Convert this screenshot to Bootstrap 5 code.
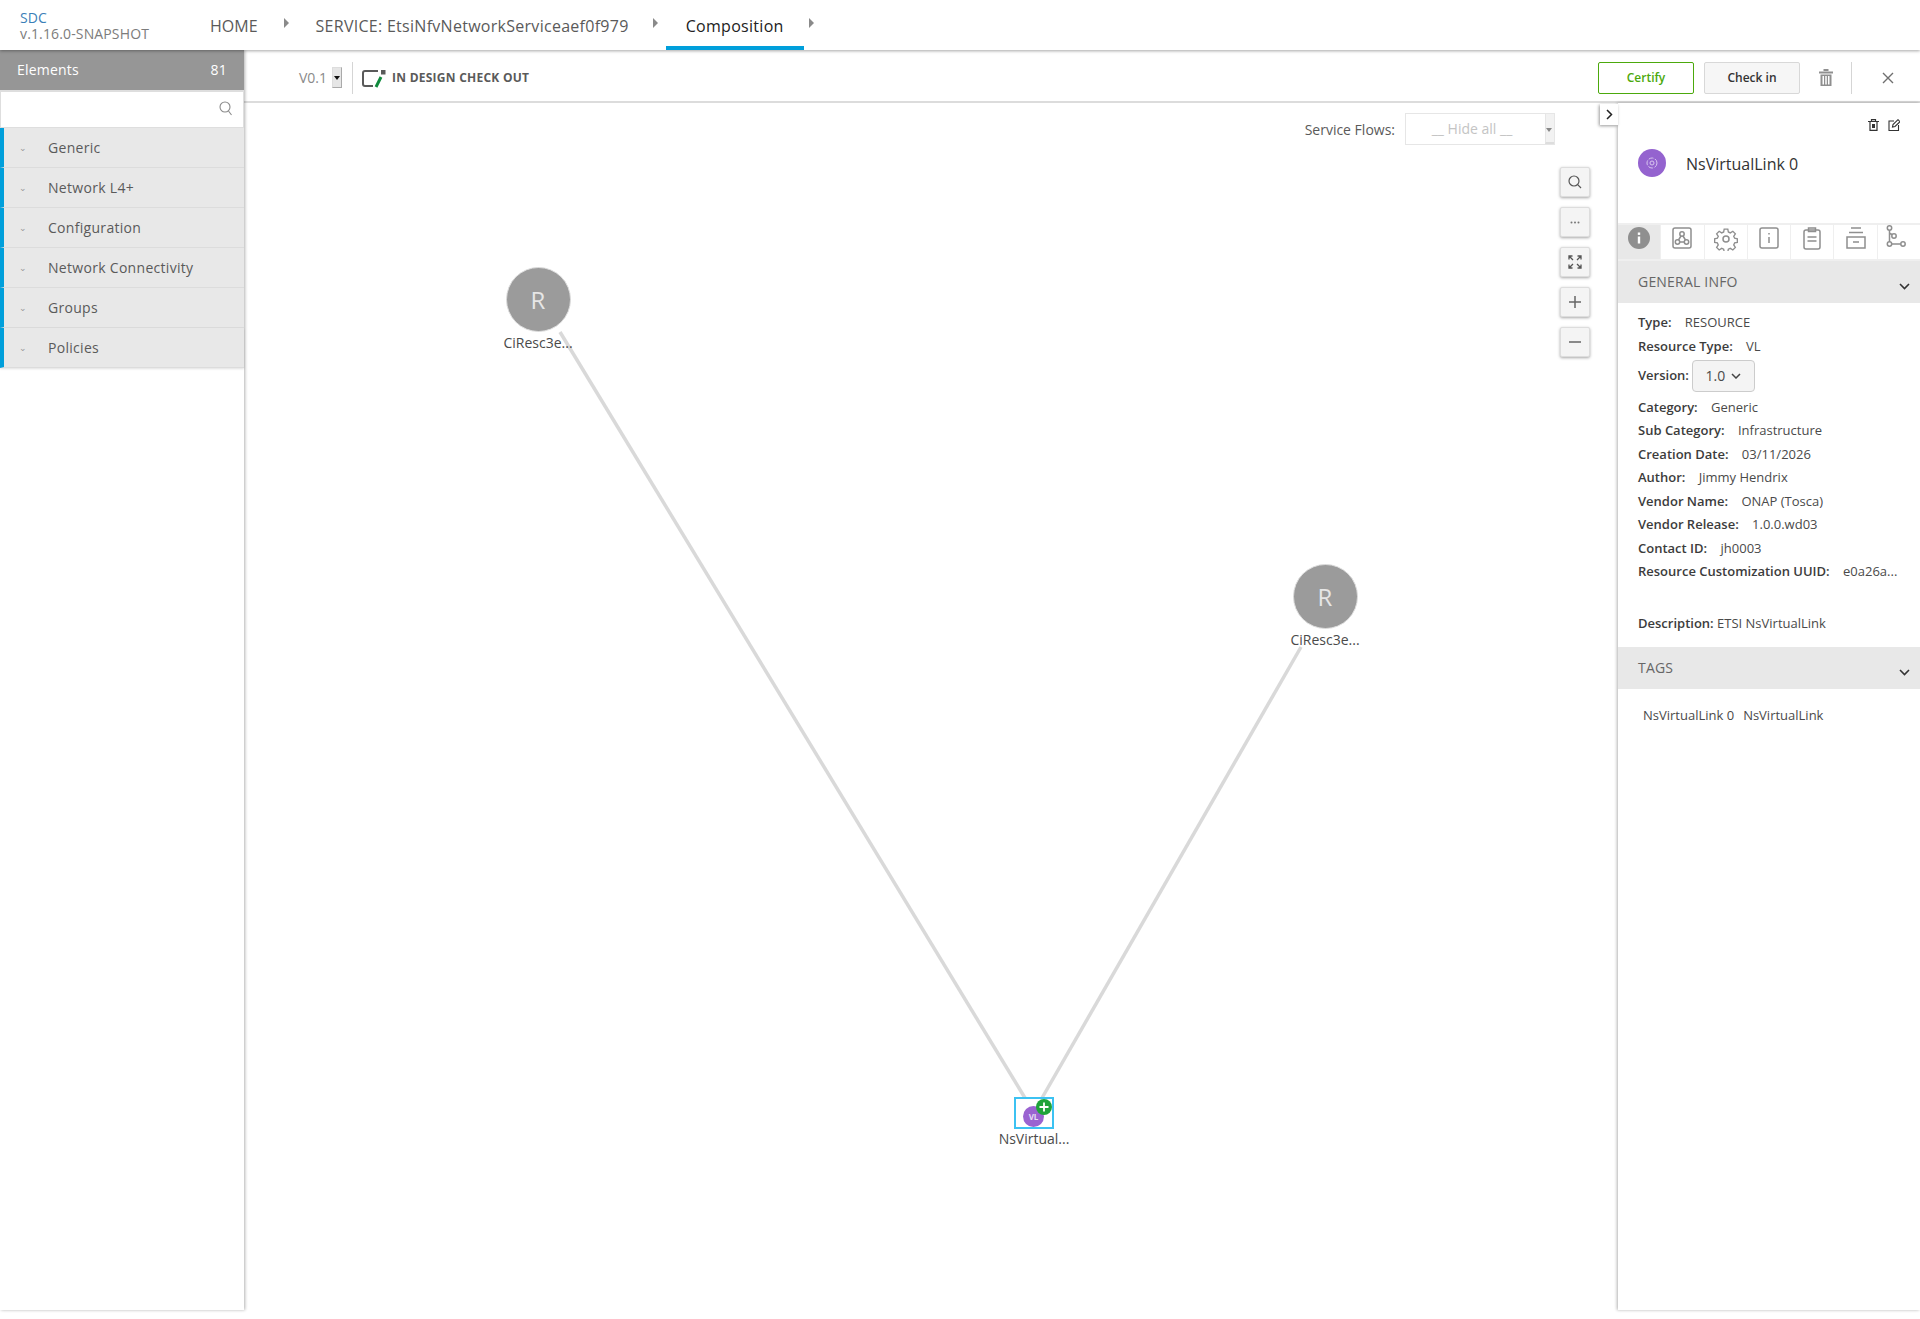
<!DOCTYPE html>
<html lang="en">
<head>
<meta charset="utf-8">
<title>SDC Composition</title>
<link href="https://cdn.jsdelivr.net/npm/bootstrap@5.3.0/dist/css/bootstrap.min.css" rel="stylesheet">
<style>
html,body{height:100%;}
body{font-family:"Open Sans","Liberation Sans",sans-serif;color:#5a5a5a;background:#fff;overflow:hidden;}
.app-shell{height:1310px;display:flex;flex-direction:column;}
.top-bar{height:50px;flex:none;padding-left:20px;box-shadow:0 1px 3px rgba(0,0,0,.35);position:relative;z-index:5;background:#fff;}
.brand-box{width:190px;font-size:14px;line-height:16px;padding-top:10px;color:#7c7c7c;letter-spacing:.14px;}
.brand-box b{display:block;font-weight:400;color:#3b7fb8;font-size:14px;}
.crumb{font-size:16px;line-height:52px;color:#5a5a5a;height:50px;}
.crumb-wide{font-weight:500;letter-spacing:.28px;}
.crumb-active{color:#222;border-bottom:4px solid #009fdb;padding:0 20px;font-weight:500;letter-spacing:.3px;}
.crumb-sep{height:50px;display:flex;align-items:center;}
.crumb-arrow{width:0;height:0;border-left:5px solid #8a8a8a;border-top:5px solid transparent;border-bottom:5px solid transparent;margin-top:-4px;}
.sep-a{width:58px;justify-content:center;}
.sep-b{width:37px;justify-content:flex-end;padding-right:8px;}
.sep-c{width:16px;justify-content:center;}
.work-row{flex:1;min-height:0;}
.side-left{width:244px;flex:none;box-shadow:1px 0 3px rgba(0,0,0,.3);background:#fff;position:relative;z-index:3;}
.el-head{height:40px;background:#969696;color:#fff;font-size:14px;padding:0 17px 2px 17px;font-weight:500;letter-spacing:.2px;}
.el-search{height:38px;border:1px solid #dedede;border-top-width:2px;padding:0 10px 3px 0;}
.el-item{height:40px;background:#e8e8e8;border-left:4px solid #009fdb;border-bottom:1px solid #dcdcdc;font-size:14px;color:#5a5a5a;font-weight:500;letter-spacing:.3px;}
.el-item:last-child{box-shadow:0 1px 2px rgba(0,0,0,.12);}
.el-dash{width:44px;padding-left:15px;color:#9a9a9a;font-size:9px;font-weight:400;}
.main-col{flex:1;min-width:0;}
.tool-bar{height:53px;flex:none;border-bottom:2px solid #dcdcdc;padding:4px 0 0 55px;background:#fff;}
.ver-text{font-size:14px;color:#8a8a8a;}
.ver-caret{width:10px;height:21px;background:#e6e6e6;border:1px solid #aaa;border-left-color:#ddd;border-top-color:#ddd;margin:0 10px 0 5px;position:relative;}
.ver-caret::after{content:"";position:absolute;left:1px;top:8px;border-left:3px solid transparent;border-right:3px solid transparent;border-top:4px solid #111;}
.v-rule{width:1px;height:32px;background:#d5d5d5;}
.state-icon{margin:0 5px 0 8px;}
.state-text{font-size:12px;font-weight:700;color:#5a5a5a;letter-spacing:.25px;}
.act-btn{width:96px;height:32px;font-size:12px;font-weight:600;display:flex;align-items:center;justify-content:center;border-radius:2px;}
.act-green{border:1px solid #4ca90c;color:#4ca90c;background:#fff;margin-right:10px;}
.act-gray{border:1px solid #d8d8d8;color:#333;background:#f6f6f6;margin-right:19px;}
.rule-gap{margin-left:18px;}
.close-x{margin:0 26px 0 30px;}
.stage-row{flex:1;min-height:0;}
.stage{flex:1;position:relative;min-width:0;}
.stage-lines{position:absolute;left:0;top:0;width:100%;height:100%;}
.flows-row{position:relative;margin-right:63px;height:52px;}
.flows-label{font-size:14px;color:#5a5a5a;margin-right:10px;}
.flows-sel{width:150px;height:32px;border:1px solid #e6e6e6;font-size:14px;color:#c4c4c4;text-align:center;line-height:30px;position:relative;padding-right:16px;}
.flows-sel::after{content:"";position:absolute;right:0;top:0;bottom:0;width:9px;background:#f2f2f2;border-left:1px solid #e6e6e6;border-bottom:2px solid #ddd;}
.flows-sel::before{content:"";position:absolute;right:2px;top:14px;border-left:3px solid transparent;border-right:3px solid transparent;border-top:4px solid #888;z-index:1;}
.zoom-stack{position:absolute;right:28px;top:64px;gap:10px;}
.zoom-btn{width:30px;height:30px;background:#f4f4f4;border:1px solid #ddd;box-shadow:0 1px 3px rgba(0,0,0,.35);border-radius:2px;color:#666;}
.node-place{position:absolute;width:100px;text-align:center;font-size:14px;font-weight:500;color:#4a4a4a;line-height:18px;}
.node-r{width:65px;height:65px;border-radius:50%;background:#9b9b9b;color:#e6e6e6;font-size:24px;line-height:63px;margin:0 auto 2px;font-weight:400;border:1px solid #ddd;}
.node-vl-box{width:40px;height:32px;border:2px solid #3cc2f2;margin:0 auto 1px;position:relative;background:#fff;}
.node-vl{position:absolute;left:7px;top:7px;width:21px;height:21px;border-radius:50%;background:#9a63d1;color:#e8dcf5;font-size:8px;line-height:21px;font-weight:700;}
.node-plus{position:absolute;left:20px;top:0;width:16px;height:16px;}
.n-one{left:244px;top:164px;}
.n-two{left:1031px;top:461px;}
.n-three{left:740px;top:994px;}
.side-right{width:302px;flex:none;position:relative;box-shadow:-1px 0 3px rgba(0,0,0,.3);background:#fff;z-index:3;}
.collapse-tab{position:absolute;left:-18px;top:1px;width:18px;height:21px;background:#fff;box-shadow:-1px 1px 3px rgba(0,0,0,.4);}
.panel-tools{height:45px;padding:16px 20px 0 0;gap:9px;}
.panel-title{height:75px;padding:1px 0 0 20px;align-items:flex-start;}
.panel-dot{width:28px;height:28px;border-radius:50%;background:#9463cf;flex:none;}
.panel-name{font-size:16px;color:#333;margin-left:20px;line-height:30px;font-weight:400;}
.tab-strip{height:38px;border-top:2px solid #efefef;border-bottom:2px solid #efefef;}
.tab-cell{flex:1;border-right:1px solid #efefef;display:flex;justify-content:center;padding-top:2px;}
.tab-cell-on{background:#e8e8e8;}
.tab-last{border-right:0;padding-top:0;}
.tab-last svg{margin-right:5px;}
.sec-head{height:42px;background:#e8e8e8;padding:0 10px 0 20px;font-size:14px;font-weight:500;color:#666;letter-spacing:.2px;}
.sec-head span{margin-top:-1px;}
.sec-chev{margin-top:8px;}
.sec-body{padding:10px 0 0 20px;font-size:13px;color:#4a4a4a;}
.info-line{line-height:18px;margin-bottom:5.55px;white-space:nowrap;}
.info-line b{font-weight:600;color:#3c3c3c;margin-right:10px;}
.info-tight{margin-bottom:0;}
.ver-line{display:flex;align-items:center;height:32px;margin:5px 0 6px;}
.ver-line b{font-weight:600;color:#3c3c3c;margin-right:3px;}
.ver-dd{width:63px;height:32px;border:1px solid #ccc;background:#f4f4f4;border-radius:4px;gap:6px;font-size:14px;}
.desc-line{margin-top:34px;line-height:18px;height:33px;}
.desc-line b{font-weight:600;color:#3c3c3c;}
.tag-line{padding:17px 0 0 25px;font-size:13px;color:#4a4a4a;line-height:18px;}
.tag-line span{margin-right:9px;}
svg{display:block;}
</style>
</head>
<body>
<div class="app-shell">
  <nav class="top-bar d-flex align-items-start">
    <div class="brand-box"><b>SDC</b>v.1.16.0-SNAPSHOT</div>
    <div class="crumb">HOME</div>
    <div class="crumb-sep sep-a"><div class="crumb-arrow"></div></div>
    <div class="crumb crumb-wide">SERVICE: EtsiNfvNetworkServiceaef0f979</div>
    <div class="crumb-sep sep-b"><div class="crumb-arrow"></div></div>
    <div class="crumb crumb-active">Composition</div>
    <div class="crumb-sep sep-c"><div class="crumb-arrow"></div></div>
  </nav>
  <div class="work-row d-flex">
    <aside class="side-left">
      <div class="el-head d-flex align-items-center justify-content-between"><span>Elements</span><span>81</span></div>
      <div class="el-search d-flex align-items-center justify-content-end">
        <svg width="14" height="15" viewBox="0 0 14 15" fill="none" stroke="#8a8a8a" stroke-width="1.1"><circle cx="6" cy="6" r="5"/><path d="M9.5 10l3 4"/></svg>
      </div>
      <div class="el-item d-flex align-items-center"><span class="el-dash">&#8964;</span>Generic</div>
      <div class="el-item d-flex align-items-center"><span class="el-dash">&#8964;</span>Network L4+</div>
      <div class="el-item d-flex align-items-center"><span class="el-dash">&#8964;</span>Configuration</div>
      <div class="el-item d-flex align-items-center"><span class="el-dash">&#8964;</span>Network Connectivity</div>
      <div class="el-item d-flex align-items-center"><span class="el-dash">&#8964;</span>Groups</div>
      <div class="el-item d-flex align-items-center"><span class="el-dash">&#8964;</span>Policies</div>
    </aside>
    <div class="main-col d-flex flex-column">
      <div class="tool-bar d-flex align-items-center">
        <span class="ver-text">V0.1</span><span class="ver-caret"></span><span class="v-rule"></span>
        <svg class="state-icon" width="26" height="20" viewBox="0 0 26 20" fill="none"><path d="M17 3H4a2 2 0 0 0-2 2v11a2 2 0 0 0 2 2h8" stroke="#5a5a5a" stroke-width="2"/><path d="M15 19l5-10" stroke="#0f8a3c" stroke-width="3"/><rect x="20" y="2" width="4.500" height="4.500" fill="#5a5a5a"/></svg>
        <span class="state-text">IN DESIGN CHECK OUT</span>
        <div class="ms-auto d-flex align-items-center">
          <div class="act-btn act-green">Certify</div>
          <div class="act-btn act-gray">Check in</div>
          <svg width="14" height="17" viewBox="0 0 14 17" fill="#8f8f8f"><rect x="0" y="2.500" width="14" height="2"/><rect x="4.500" y="0" width="5" height="2"/><path d="M1.500 5.500h11v11.500h-11zM3.500 7v8.500h1.500V7zM6.250 7v8.500h1.500V7zM9 7v8.500h1.500V7z" fill-rule="evenodd"/></svg>
          <span class="v-rule rule-gap"></span>
          <svg class="close-x" width="12" height="12" viewBox="0 0 12 12" stroke="#6f6f6f" stroke-width="1.400"><path d="M1 1l10 10M11 1L1 11"/></svg>
        </div>
      </div>
      <div class="stage-row d-flex">
        <div class="stage">
          <svg class="stage-lines" viewBox="0 0 1374 1207" preserveAspectRatio="none" fill="none" stroke="#d9d9d9" stroke-width="3.5"><path d="M316 229L781 995"/><path d="M1057 544L798 995"/></svg>
          <div class="flows-row d-flex justify-content-end align-items-center">
            <span class="flows-label">Service Flows:</span>
            <div class="flows-sel">__ Hide all __</div>
          </div>
          <div class="zoom-stack d-flex flex-column">
            <div class="zoom-btn d-flex align-items-center justify-content-center"><svg width="14" height="14" viewBox="0 0 14 14" fill="none" stroke="#555" stroke-width="1.200"><circle cx="6" cy="6" r="5"/><path d="M9.700 9.700L13 13"/></svg></div>
            <div class="zoom-btn d-flex align-items-center justify-content-center"><svg width="10" height="3" viewBox="0 0 10 3" fill="#777"><circle cx="1.500" cy="1.500" r="1"/><circle cx="5" cy="1.500" r="1"/><circle cx="8.500" cy="1.500" r="1"/></svg></div>
            <div class="zoom-btn d-flex align-items-center justify-content-center"><svg width="14" height="14" viewBox="0 0 14 14" fill="none" stroke="#555" stroke-width="1.300"><path d="M1 4.500V1h3.500M1 1l4 4M9.500 1H13v3.500M13 1L9 5M1 9.500V13h3.500M1 13l4-4M13 9.500V13H9.500M13 13L9 9"/></svg></div>
            <div class="zoom-btn d-flex align-items-center justify-content-center"><svg width="12" height="12" viewBox="0 0 12 12" stroke="#666" stroke-width="1.500"><path d="M0 6h12M6 0v12"/></svg></div>
            <div class="zoom-btn d-flex align-items-center justify-content-center"><svg width="12" height="2" viewBox="0 0 12 2" stroke="#666" stroke-width="1.500"><path d="M0 1h12"/></svg></div>
          </div>
          <div class="node-place n-one"><div class="node-r">R</div>CiResc3e...</div>
          <div class="node-place n-two"><div class="node-r">R</div>CiResc3e...</div>
          <div class="node-place n-three">
            <div class="node-vl-box">
              <div class="node-vl">VL</div>
              <svg class="node-plus" viewBox="0 0 16 16"><circle cx="8" cy="8" r="8" fill="#1fa33a"/><path d="M8 3.500v9M3.500 8h9" stroke="#fff" stroke-width="1.800"/></svg>
            </div>
            <div>NsVirtual...</div>
          </div>
        </div>
        <aside class="side-right">
          <div class="collapse-tab d-flex align-items-center justify-content-center"><svg width="7" height="11" viewBox="0 0 7 11" fill="none" stroke="#222" stroke-width="1.500"><path d="M1 1l4.500 4.500L1 10"/></svg></div>
          <div class="panel-tools d-flex justify-content-end">
            <svg width="11" height="12" viewBox="0 0 11 12" fill="none" stroke="#333" stroke-width="1.200"><path d="M0 2.500h11M3.500 2V.7h4V2M2 2.500V11.300h7V2.500"/><rect x="4" y="5" width="3" height="4" fill="#333" stroke="none"/></svg>
            <svg width="12" height="12" viewBox="0 0 12 12" fill="none" stroke="#333" stroke-width="1.100"><path d="M6 2H1v9.500h9.500V6"/><path d="M4.500 8l.5-2.500L10 .7l2 2L7 7.500z"/></svg>
          </div>
          <div class="panel-title d-flex">
            <div class="panel-dot d-flex align-items-center justify-content-center"><svg width="12" height="12" viewBox="0 0 12 12" fill="none" stroke="#d9c7ef" stroke-width="1"><circle cx="6" cy="6" r="5" stroke-dasharray="5 1.500"/><circle cx="6" cy="6" r="2"/></svg></div>
            <div class="panel-name">NsVirtualLink 0</div>
          </div>
          <div class="tab-strip d-flex">
            <div class="tab-cell tab-cell-on"><svg width="22" height="22" viewBox="0 0 22 22"><circle cx="11" cy="11" r="11" fill="#8f8f8f"/><rect x="9.800" y="9.500" width="2.400" height="7" fill="#fff"/><rect x="9.800" y="5.500" width="2.400" height="2.400" fill="#fff"/></svg></div>
            <div class="tab-cell"><svg width="20" height="22" viewBox="0 0 20 22" fill="none" stroke="#8f8f8f" stroke-width="1.500"><rect x="1" y="1" width="18" height="20" rx="2"/><circle cx="10" cy="7" r="2.200"/><circle cx="5.500" cy="15" r="2.200"/><circle cx="14.500" cy="15" r="2.200"/><path d="M9 9l-2.500 4M11 9l2.500 4M7.700 15h4.600"/></svg></div>
            <div class="tab-cell"><svg width="24" height="24" viewBox="0 0 24 24" fill="none" stroke="#8f8f8f" stroke-width="1.500"><circle cx="12" cy="12" r="3"/><path d="M10 1h4l.6 3.200 2.200 1 2.800-1.800 2.800 2.800-1.800 2.800 1 2.200 3 .6v4l-3 .6-1 2.200 1.800 2.800-2.800 2.800-2.800-1.800-2.200 1-.6 3h-4l-.6-3-2.200-1-2.800 1.800-2.800-2.800 1.800-2.800-1-2.200-3-.6v-4l3-.6 1-2.200-1.800-2.800 2.800-2.800 2.800 1.800 2.200-1z" transform="translate(1.200 1.200) scale(.9)"/></svg></div>
            <div class="tab-cell"><svg width="20" height="22" viewBox="0 0 20 22" fill="none" stroke="#8f8f8f" stroke-width="1.500"><rect x="1" y="1" width="18" height="20" rx="2"/><path d="M10 6v1.500M10 10v6"/></svg></div>
            <div class="tab-cell"><svg width="18" height="23" viewBox="0 0 18 23" fill="none" stroke="#8f8f8f" stroke-width="1.500"><rect x="1" y="3" width="16" height="19" rx="2"/><path d="M5.500 3V1h7v3.500h-7zM4.500 10h9M4.500 14h9"/></svg></div>
            <div class="tab-cell"><svg width="20" height="22" viewBox="0 0 20 22" fill="none" stroke="#8f8f8f" stroke-width="1.500"><path d="M5 1h10M3 5.500h14M1 10h18v11H1zM7 15h6"/></svg></div>
            <div class="tab-cell tab-last"><svg width="20" height="24" viewBox="0 0 20 24" fill="none" stroke="#8f8f8f" stroke-width="1.500"><circle cx="3.500" cy="3" r="2.200"/><circle cx="3.500" cy="19" r="2.200"/><circle cx="8" cy="11" r="2.200"/><circle cx="17" cy="19" r="2.200"/><path d="M3.500 5.200v11.600M5.700 19h9.100M4 8.500l2.200 1"/></svg></div>
          </div>
          <div class="sec-head d-flex align-items-center justify-content-between"><span>GENERAL INFO</span><svg class="sec-chev" width="11" height="7" viewBox="0 0 11 7" fill="none" stroke="#333" stroke-width="1.600"><path d="M1 1l4.500 4.500L10 1"/></svg></div>
          <div class="sec-body">
            <div class="info-line"><b>Type:</b> RESOURCE</div>
            <div class="info-line info-tight"><b>Resource Type:</b> VL</div>
            <div class="ver-line"><b>Version:</b><div class="ver-dd d-flex align-items-center justify-content-center">1.0 <svg width="10" height="6" viewBox="0 0 10 6" fill="none" stroke="#444" stroke-width="1.500"><path d="M1 1l4 4 4-4"/></svg></div></div>
            <div class="info-line"><b>Category:</b> Generic</div>
            <div class="info-line"><b>Sub Category:</b> Infrastructure</div>
            <div class="info-line"><b>Creation Date:</b> 03/11/2026</div>
            <div class="info-line"><b>Author:</b> Jimmy Hendrix</div>
            <div class="info-line"><b>Vendor Name:</b> ONAP (Tosca)</div>
            <div class="info-line"><b>Vendor Release:</b> 1.0.0.wd03</div>
            <div class="info-line"><b>Contact ID:</b> jh0003</div>
            <div class="info-line info-tight"><b>Resource Customization UUID:</b> e0a26a...</div>
            <div class="desc-line"><b>Description:</b> ETSI NsVirtualLink</div>
          </div>
          <div class="sec-head d-flex align-items-center justify-content-between"><span>TAGS</span><svg class="sec-chev" width="11" height="7" viewBox="0 0 11 7" fill="none" stroke="#333" stroke-width="1.600"><path d="M1 1l4.500 4.500L10 1"/></svg></div>
          <div class="tag-line"><span>NsVirtualLink 0</span><span>NsVirtualLink</span></div>
        </aside>
      </div>
    </div>
  </div>
</div>
<script src="https://cdn.jsdelivr.net/npm/bootstrap@5.3.0/dist/js/bootstrap.bundle.min.js"></script>
</body>
</html>
